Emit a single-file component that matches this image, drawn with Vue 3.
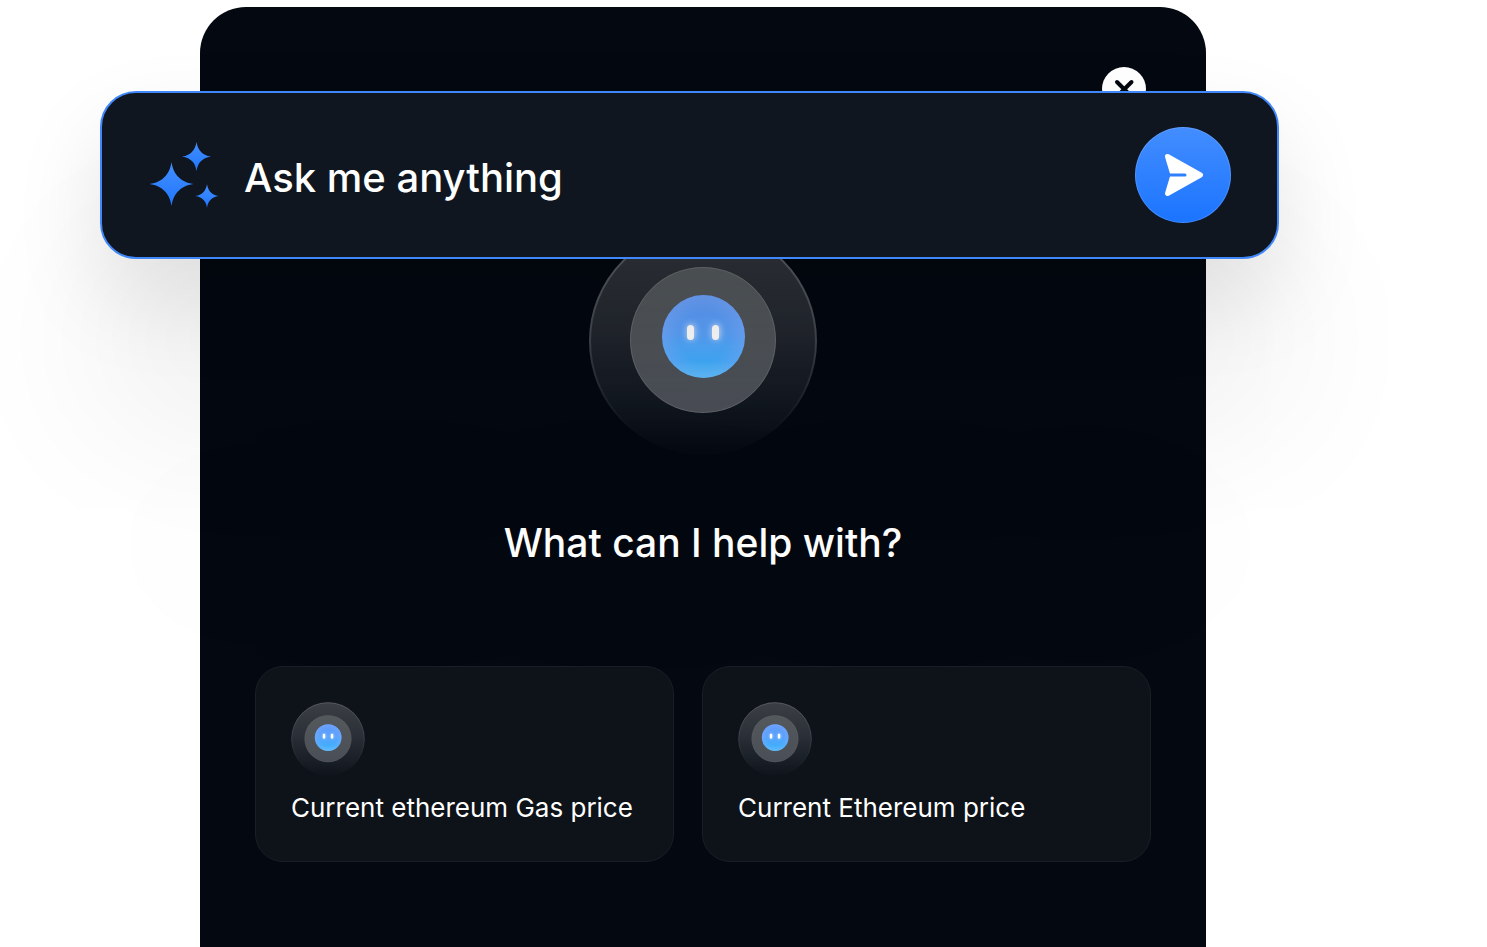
<template>
  <div class="stage">
    <!-- shared bot avatar -->
    <svg class="defs" aria-hidden="true">
      <defs>
        <linearGradient id="ring" x1="0" y1="0" x2="0" y2="1">
          <stop offset="0" stop-color="#ffffff" stop-opacity="0.19" />
          <stop offset="0.45" stop-color="#f0f4ff" stop-opacity="0.13" />
          <stop offset="0.75" stop-color="#b9d3e6" stop-opacity="0.08" />
          <stop offset="1" stop-color="#a9d3e6" stop-opacity="0.01" />
        </linearGradient>
        <linearGradient id="ring-edge" x1="0" y1="0" x2="0" y2="1">
          <stop offset="0" stop-color="#ffffff" stop-opacity="0.22" />
          <stop offset="0.5" stop-color="#ffffff" stop-opacity="0.14" />
          <stop offset="0.9" stop-color="#ffffff" stop-opacity="0" />
        </linearGradient>
        <linearGradient id="core" x1="0" y1="0" x2="0" y2="1">
          <stop offset="0" stop-color="#54595c" />
          <stop offset="1" stop-color="#4a4e56" />
        </linearGradient>
        <linearGradient id="face" x1="0" y1="0" x2="0" y2="1">
          <stop offset="0" stop-color="#5e9bfa" />
          <stop offset="0.45" stop-color="#5ba2fb" />
          <stop offset="0.8" stop-color="#42adfd" />
          <stop offset="1" stop-color="#4cc0fa" />
        </linearGradient>
        <radialGradient id="face-rim">
          <stop offset="0.6" stop-color="#8cb0ff" stop-opacity="0" />
          <stop offset="1" stop-color="#8cb0ff" stop-opacity="0.35" />
        </radialGradient>
        <filter id="glow" x="-200%" y="-100%" width="500%" height="300%">
          <feGaussianBlur stdDeviation="3" />
        </filter>
      </defs>
      <symbol id="bot" viewBox="0 0 230 230">
        <circle cx="115" cy="115" r="114" fill="url(#ring)" />
        <circle cx="115" cy="115" r="113" fill="none" stroke="url(#ring-edge)" stroke-width="2" />
        <circle cx="115" cy="114" r="73" fill="url(#core)" />
        <circle cx="115" cy="114" r="72.5" fill="none" stroke="#ffffff" stroke-opacity="0.12" />
        <circle cx="115.500" cy="110.500" r="41.500" fill="url(#face)" />
        <circle cx="115.500" cy="110.500" r="41.500" fill="url(#face-rim)" />
        <g fill="#ffffff" opacity="0.7" filter="url(#glow)">
          <rect x="99" y="98" width="8" height="16" rx="4" />
          <rect x="124" y="98" width="8" height="16" rx="4" />
        </g>
        <rect x="99" y="99" width="7" height="15" rx="3.500" fill="#ffffff" />
        <rect x="124" y="99" width="7" height="15" rx="3.500" fill="#ffffff" />
      </symbol>
    </svg>

    <main class="panel">
      <div class="panel-header">
        <button class="close-btn" type="button" aria-label="Close">
          <svg viewBox="0 0 44 44" aria-hidden="true">
            <path d="M15 15 L29.500 29.500 M29.500 15 L15 29.500" />
          </svg>
        </button>
      </div>
      <svg class="bot-large" aria-hidden="true"><use href="#bot" /></svg>
      <h1>What can I help with?</h1>
      <div class="suggestions">
        <button
          v-for="item in suggestions"
          :key="item"
          class="card"
          type="button"
          @click="question = item"
        >
          <svg class="bot-small" aria-hidden="true"><use href="#bot" /></svg>
          <span>{{ item }}</span>
        </button>
      </div>
    </main>

    <form class="ask-bar" @submit.prevent="send">
      <svg class="sparkles" viewBox="0 0 72 68" aria-hidden="true">
        <defs>
          <linearGradient id="spark" x1="0" y1="0" x2="0" y2="1">
            <stop offset="0" stop-color="#448fff" />
            <stop offset="1" stop-color="#1f76ff" />
          </linearGradient>
          <path
            id="star"
            d="M0 -22 C1 -15 4 -9.500 7 -7 C9.500 -4 15 -1 22 0 C15 1 9.500 4 7 7 C4 9.500 1 15 0 22 C-1 15 -4 9.500 -7 7 C-9.500 4 -15 1 -22 0 C-15 -1 -9.500 -4 -7 -7 C-4 -9.500 -1 -15 0 -22 Z"
          />
        </defs>
        <g fill="url(#spark)">
          <use href="#star" transform="translate(23.500 43)" />
          <use href="#star" transform="translate(48.500 15.500) scale(0.660)" />
          <use href="#star" transform="translate(59 55) scale(0.530)" />
        </g>
      </svg>
      <input v-model="question" type="text" placeholder="Ask me anything" aria-label="Ask me anything" />
      <button class="send-btn" type="submit" aria-label="Send">
        <svg viewBox="0 0 96 96" aria-hidden="true">
          <path class="plane" d="M32.500 29.500 L65.500 48 L32.500 66.500 L38 48 Z" />
          <path class="slit" d="M33 48 H50" />
        </svg>
      </button>
    </form>
  </div>
</template>

<script setup>
import { ref } from 'vue';

const question = ref('');
const suggestions = ['Current ethereum Gas price', 'Current Ethereum price'];

const send = () => {
  question.value = '';
};
</script>

<style>
body {
  margin: 0;
  background-color: #fff;
}
</style>

<style scoped>
.stage {
  position: relative;
  display: flex;
  flex-direction: column;
  box-sizing: border-box;
  min-height: 100vh;
  padding: 7px 281px 0 200px;
  overflow: hidden;
  font-family: Inter, "Liberation Sans", sans-serif;
}

.defs {
  position: absolute;
  width: 0;
  height: 0;
}

button {
  padding: 0;
  border: none;
  font-family: inherit;
  cursor: pointer;
}

.panel {
  flex: 1;
  display: flex;
  flex-direction: column;
  align-items: center;
  padding: 60px 55px 84px;
  border-radius: 46px 46px 0 0;
  background-color: #040810;
  color: #fff;
}

.panel-header {
  align-self: stretch;
  display: flex;
  justify-content: flex-end;
  padding-right: 5px;
}

.close-btn {
  width: 44px;
  height: 44px;
  border-radius: 50%;
  background-color: #fff;
}

.close-btn svg {
  display: block;
  fill: none;
  stroke: #03070f;
  stroke-width: 4;
  stroke-linecap: round;
}

.bot-large {
  width: 230px;
  height: 230px;
  margin-top: 115px;
}

h1 {
  margin: 61px 0 0;
  font-size: 39px;
  font-weight: 500;
  line-height: 52px;
  color: #fff;
}

.suggestions {
  align-self: stretch;
  display: grid;
  grid-template-columns: 14fr 15fr;
  gap: 28px;
  margin-top: 97px;
}

.card {
  display: flex;
  flex-direction: column;
  align-items: flex-start;
  gap: 14px;
  padding: 35px;
  border: 1px solid #1a1e26;
  border-radius: 28px;
  background-color: #0e1219;
  color: #fff;
  font-size: 26px;
  line-height: 36px;
  text-align: left;
  white-space: nowrap;
}

.bot-small {
  width: 74px;
  height: 74px;
}

.ask-bar {
  position: absolute;
  top: 91px;
  left: 100px;
  right: 208px;
  display: flex;
  align-items: center;
  gap: 24px;
  padding: 34px 46px;
  border: 2px solid #4088fa;
  border-radius: 36px;
  background-color: #0f161f;
  box-shadow:
    0 41px 90px rgba(0, 0, 0, 0.1),
    0 164px 164px rgba(0, 0, 0, 0.07),
    0 369px 221px rgba(0, 0, 0, 0.01);
}

.sparkles {
  flex: none;
  width: 72px;
  height: 68px;
}

input {
  flex: 1;
  min-width: 0;
  padding: 6px 0 0;
  border: none;
  outline: none;
  background: none;
  color: #fff;
  font-family: inherit;
  font-size: 40px;
  font-weight: 500;
  line-height: 52px;
}

input::placeholder {
  color: #fff;
  opacity: 1;
}

.send-btn {
  flex: none;
  width: 96px;
  height: 96px;
  border-radius: 50%;
  background: linear-gradient(#438dff, #1b74ff);
  box-shadow: inset 0 0 0 1px rgba(255, 255, 255, 0.15);
}

.send-btn svg {
  display: block;
}

.plane {
  fill: #fff;
  stroke: #fff;
  stroke-width: 5;
  stroke-linejoin: round;
}

.slit {
  fill: none;
  stroke: #2f80ff;
  stroke-width: 3;
  stroke-linecap: round;
}
</style>
